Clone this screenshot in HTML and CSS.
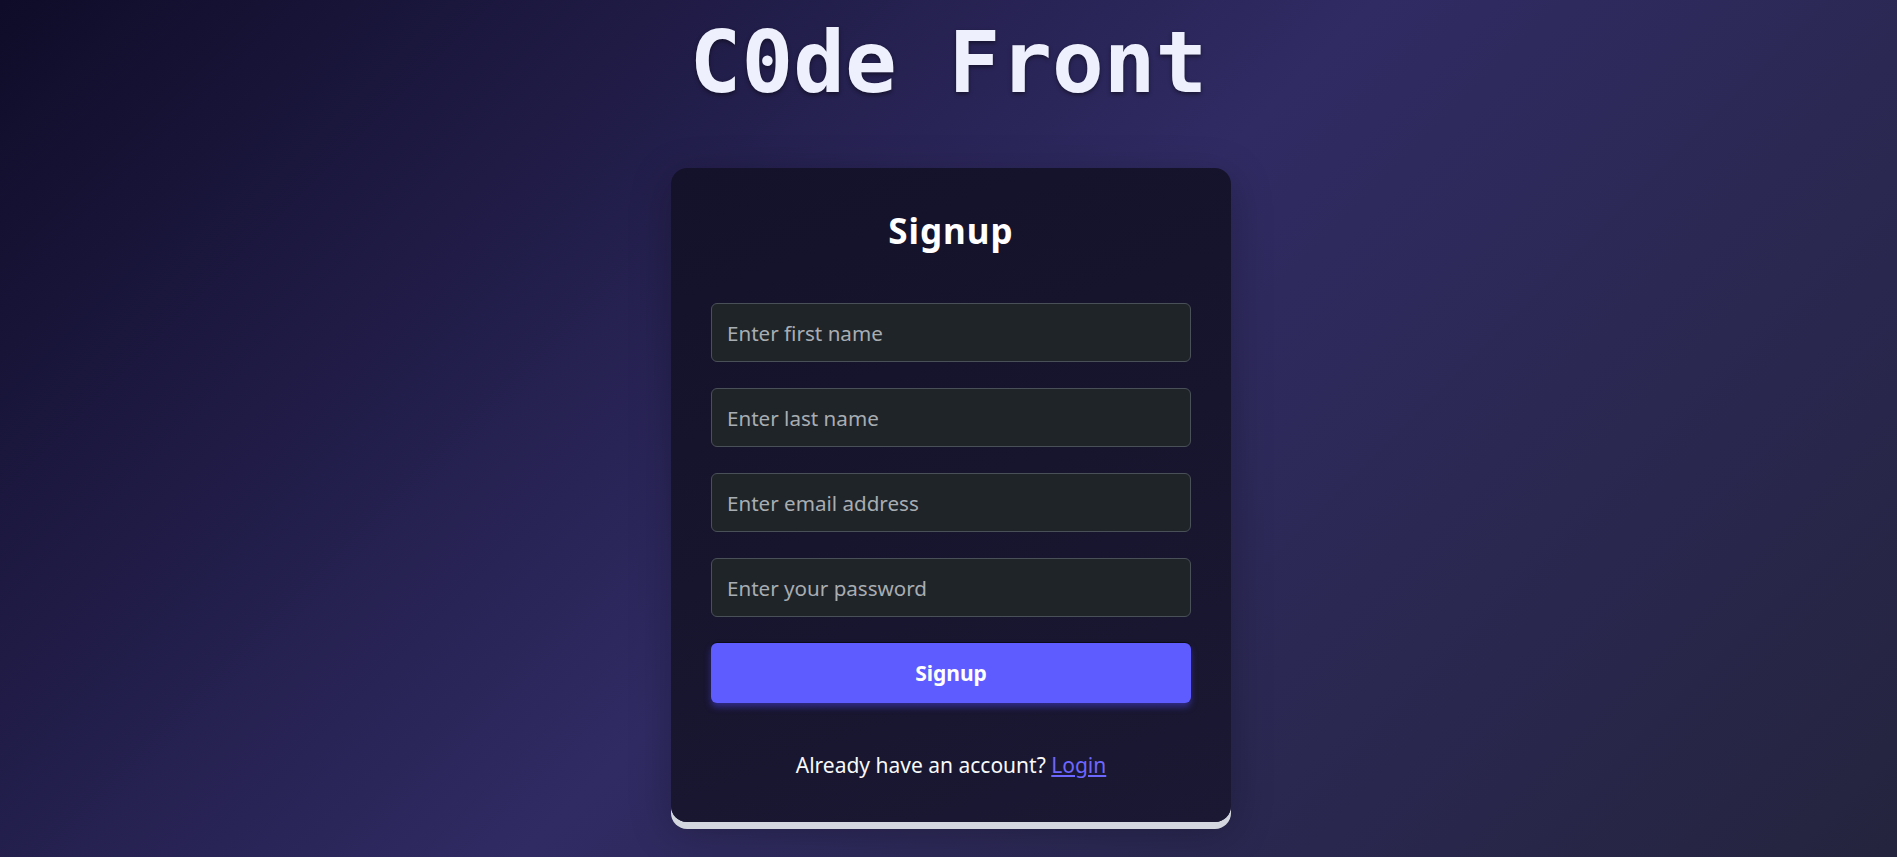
FILE: index.html
```html
<!DOCTYPE html>
<html lang="en">
<head>
<meta charset="utf-8">
<title>C0de Front - Signup</title>
<link rel="stylesheet" href="styles.css">
</head>
<body>
<main class="page">
  <h1 class="brand">C0de Front</h1>
  <section class="card">
    <h2 class="card-title">Signup</h2>
    <form class="form">
      <input class="field" type="text" placeholder="Enter first name">
      <input class="field" type="text" placeholder="Enter last name">
      <input class="field" type="email" placeholder="Enter email address">
      <input class="field" type="password" placeholder="Enter your password">
      <button class="btn" type="button">Signup</button>
    </form>
    <p class="alt">Already have an account? <a class="alt-link" href="#">Login</a></p>
  </section>
</main>
</body>
</html>
```
FILE: styles.css
```css
html, body {
  margin: 0;
  padding: 0;
  height: 100%;
}
body {
  background: linear-gradient(135deg, #0f0c29 0%, #302b63 50%, #24243e 100%);
  font-family: "Noto Sans", "Open Sans", sans-serif;
  color: #f8f9fa;
}
.page {
  display: flex;
  flex-direction: column;
  align-items: center;
  padding-top: 19px;
}
.brand {
  margin: 0 0 63px;
  font-family: "DejaVu Sans Mono", monospace;
  font-weight: bold;
  font-size: 86px;
  line-height: 86px;
  font-variant-numeric: slashed-zero;
  color: #eef0fe;
  text-shadow: 0 2px 4px rgba(0, 0, 0, 0.45);
}
.card {
  box-sizing: border-box;
  width: 560px;
  margin-left: 5px;
  padding: 43px 40px 42px;
  border-radius: 16px;
  background: linear-gradient(160deg, #14112a 0%, #1a1832 100%);
  box-shadow: 0 7px 0 #d4d7df, 0 10px 40px rgba(0, 0, 0, 0.25);
  display: flex;
  flex-direction: column;
}
.card-title {
  margin: 0 0 52px;
  text-align: center;
  font-size: 35px;
  letter-spacing: 1px;
  line-height: 40px;
  font-weight: 700;
  color: #ffffff;
}
.form {
  display: flex;
  flex-direction: column;
  gap: 26px;
}
.field {
  box-sizing: border-box;
  height: 59px;
  padding: 0 15px;
  border: 1px solid #4a5058;
  border-radius: 6px;
  background: #1f2429;
  color: #e9ecef;
  font-family: inherit;
  font-size: 20.6px;
  outline: none;
}
.field::placeholder {
  color: #a8adb2;
}
.btn {
  height: 60px;
  border: none;
  border-radius: 6px;
  background: #5f5cff;
  color: #ffffff;
  font-family: inherit;
  font-size: 21px;
  font-weight: 700;
  box-shadow: 0 -1px 1px rgba(0, 0, 0, 0.6), 0 4px 6px rgba(70, 62, 210, 0.55);
  cursor: pointer;
}
.alt {
  margin: 47px 0 0;
  text-align: center;
  font-size: 21px;
  line-height: 30px;
  color: #f8f9fa;
}
.alt-link {
  color: #6d66ff;
  text-decoration: underline;
}
```
